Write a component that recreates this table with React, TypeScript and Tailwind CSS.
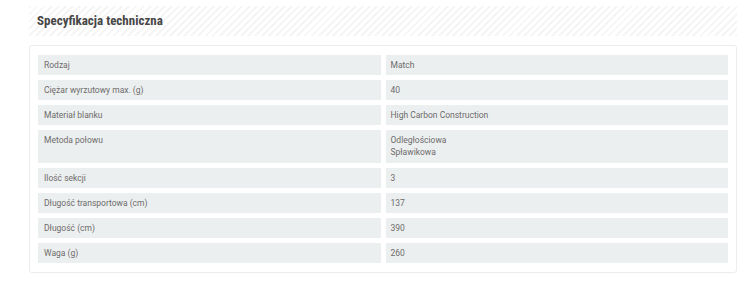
// Product technical specification panel
// Striped heading band with a two-column table of spec rows below

const specs: { label: string; value: string[] }[] = [
  { label: "Rodzaj", value: ["Match"] },
  { label: "Ciężar wyrzutowy max. (g)", value: ["40"] },
  { label: "Materiał blanku", value: ["High Carbon Construction"] },
  { label: "Metoda połowu", value: ["Odległościowa", "Spławikowa"] },
  { label: "Ilość sekcji", value: ["3"] },
  { label: "Długość transportowa (cm)", value: ["137"] },
  { label: "Długość (cm)", value: ["390"] },
  { label: "Waga (g)", value: ["260"] },
]

export default function App() {
  return (
    <div className="w-[750px] h-[283px] bg-white pt-[6px] pl-[29px] pr-[13px] font-['Roboto','Liberation_Sans',sans-serif]">

      {/* Heading band with faint diagonal stripes */}
      <div className="h-[30px] flex items-center pl-2 bg-[repeating-linear-gradient(135deg,#f5f5f5_0px,#f5f5f5_2px,#ffffff_2px,#ffffff_5px)]">
        <h2 className="text-[13px] font-bold text-[#474747] font-['Roboto_Condensed','Liberation_Sans_Narrow','Roboto',sans-serif]">
          Specyfikacja techniczna
        </h2>
      </div>

      {/* Spec table */}
      <div className="mt-[9px] border border-[#ededed] rounded-[3px] pt-[9px] pb-[9px] px-2 flex flex-col gap-[5px]">
        {specs.map((row) => (
          <div key={row.label} className="grid grid-cols-2 gap-[5px] text-[8.5px] leading-[12px] text-[#6c6c6c]">
            <div className={`bg-[#ecefef] px-1.5 pt-1 ${row.value.length > 1 ? "pb-[5px]" : "pb-1"}`}>
              {row.label}
            </div>
            <div className={`bg-[#ecefef] px-[5px] pt-1 ${row.value.length > 1 ? "pb-[5px]" : "pb-1"}`}>
              {row.value.map((v) => (
                <div key={v}>{v}</div>
              ))}
            </div>
          </div>
        ))}
      </div>

    </div>
  )
}
